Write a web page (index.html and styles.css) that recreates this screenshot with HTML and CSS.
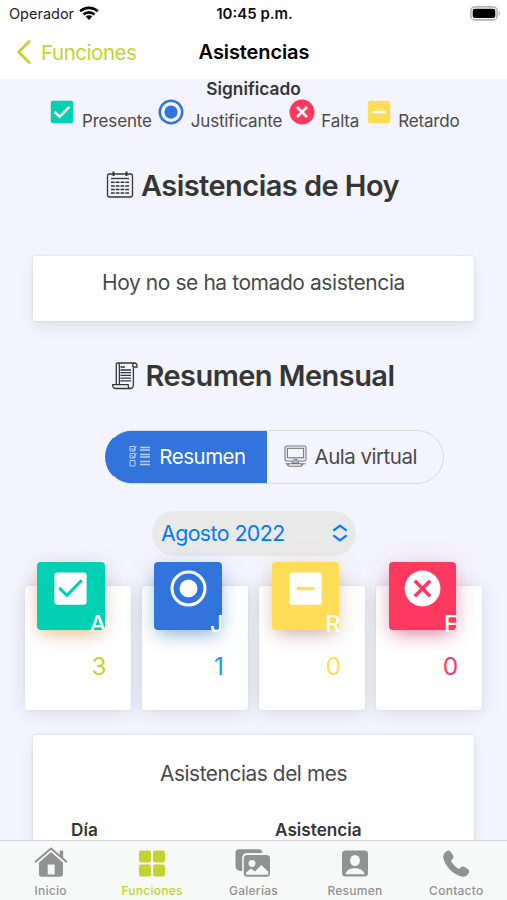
FILE: index.html
```html
<!DOCTYPE html>
<html lang="es">
<head>
<meta charset="utf-8">
<title>Asistencias</title>
<link rel="stylesheet" href="styles.css">
</head>
<body>
<div class="app">
  <header class="status">
    <div class="carrier"><span class="t-carrier">Operador</span>
      <svg width="20" height="14" viewBox="0 0 20 14"><g fill="none" stroke="#000" stroke-width="2.7"><path d="M1.2 5.3C6.1.7 13.9.7 18.8 5.3"/><path d="M4.5 8.6c3.1-2.9 7.9-2.9 11 0"/></g><path d="M6.7 10.6c1.9-1.7 4.7-1.7 6.6 0L10 14z"/></svg>
    </div>
    <span class="clock">10:45 p.m.</span>
    <svg class="battery" width="31" height="15" viewBox="0 0 31 15"><rect x=".9" y=".9" width="26.2" height="13" rx="4" fill="#fff" stroke="#b5b5b5" stroke-width="1.6"/><rect x="2.7" y="2.7" width="22.6" height="9.4" rx="2" /><path d="M28.6 5c2 .8 2 4 0 4.900z" fill="#b5b5b5"/></svg>
  </header>
  <nav class="nav">
    <div class="back"><svg width="16" height="24" viewBox="0 0 16 24"><path d="M13.200 1.500 2.500 12l10.700 10.500" fill="none" stroke="#c2d430" stroke-width="2.700" stroke-linecap="round" stroke-linejoin="round"/></svg><span class="t-back">Funciones</span></div>
    <h1 class="title">Asistencias</h1>
    <span></span>
  </nav>

  <main class="content">
    <section class="meaning">
      <strong class="t-meaning">Significado</strong>
      <div class="legend">
        <svg viewBox="0 0 24 24"><rect x="3" y="3" width="18" height="18" rx="1.600" fill="#00d1b2"/><path d="M6.200 11.900l3.900 3.900 8-8" fill="none" stroke="#fff" stroke-width="1.900"/></svg><span class="l1">Presente</span>
        <svg viewBox="0 0 24 24" fill="#3273dc"><path d="M12 20a8 8 0 1 1 0-16 8 8 0 0 1 0 16m0-18a10 10 0 1 0 0 20 10 10 0 0 0 0-20"/><circle cx="12" cy="12" r="5.300"/></svg><span class="l2">Justificante</span>
        <svg viewBox="0 0 24 24" fill="#ff3860"><circle cx="12" cy="12" r="10"/><path d="M8 8l8 8m0-8-8 8" stroke="#fff" stroke-width="2"/></svg><span class="l3">Falta</span>
        <svg viewBox="0 0 24 24" fill="#ffdd57"><rect x="3" y="3" width="18" height="18" rx="2"/><path d="M7 12h10" stroke="#fff" stroke-width="2"/></svg><span class="l4">Retardo</span>
      </div>
    </section>

    <h2 class="heading today">
      <svg width="28" height="28" viewBox="0 0 28 28" fill="none" stroke="#363636" stroke-width="1.300"><rect x="1.500" y="3" width="25" height="23" rx="1.800"/><path d="M7.500 .500v4.500M20.500 .500v4.500" stroke-width="2"/><path d="M5 7.500h18"/><path d="M5 11.300h18M5 14.900h18M5 18.500h18M5 22.100h18" stroke-width="1.500" stroke-dasharray="3.700 1.060"/></svg>
      <span class="t-today">Asistencias de Hoy</span>
    </h2>
    <div class="card notice"><span class="t-notice">Hoy no se ha tomado asistencia</span></div>

    <h2 class="heading monthly">
      <svg width="26" height="28" viewBox="0 0 26 28" fill="none" stroke="#363636" stroke-width="1.300"><path d="M4.300 22.500V4.500c0-2.500-.600-3.500 1.800-3.500h15.700c3 0 3.500 1.800 3.200 4h-3.600v17.300c0 3-.900 4.200-2.900 4.200H3.500C1.500 26.500.700 25 .700 22.700h15.500c0 2.300.500 3.800 2.300 3.800M6.100 1c1.300.300 1.300 1.500 1.300 3v18.700M21.800 1c-1 .500-1.100 2-1.100 4"/><path d="M8.500 5h4.500M8.500 8h10.500M8.500 10.700h10.500M8.500 13.400h10.500M8.500 16.100h10.500M8.500 18.800h10.500" stroke-width="1.300"/></svg>
      <span class="t-monthly">Resumen Mensual</span>
    </h2>
    <div class="switch">
      <button class="seg active"><svg width="22" height="22" viewBox="0 0 22 22" fill="none" stroke="#b8cff2" stroke-width="1"><path d="M1 1.500h5v4.500H1zM1 8.500h5v4.500H1zM1 15.500h5v5.500H1zM2.500 3l2 2.500L7.500 1M2.500 10l2 2.500L7.500 8"/><path d="M11 2.500h10M11 5h10M11 9.500h10M11 12h10M11 16.500h10M11 19.500h10" stroke-width="1.300"/></svg><span class="t-res">Resumen</span></button>
      <button class="seg"><svg width="23" height="22" viewBox="0 0 23 22" fill="none" stroke="#777" stroke-width="1.100"><rect x="1" y="1" width="21" height="15" rx="1.700"/><rect x="3.400" y="3.300" width="16.200" height="9.500"/><path d="M8.500 16v2h6v-2M9.500 14.500h4M1.500 18.700h20M5 21.300h12l1.500-1.300-1.500-1.200H5L3.500 20z"/></svg><span class="t-aula">Aula virtual</span></button>
    </div>
    <div class="month"><span class="t-month">Agosto 2022</span><svg width="16" height="18" viewBox="0 0 16 18" fill="none" stroke="#007aff" stroke-width="2.100" stroke-linecap="round" stroke-linejoin="round"><path d="M2 6.200 8 1.700l6 4.500M2 11.800l6 4.500 6-4.500"/></svg></div>

    <section class="stats">
      <div class="stat present"><div class="tile"><svg viewBox="0 0 24 24"><rect x="3" y="3" width="18" height="18" rx="1.600" fill="#fff"/><path d="M5.700 11.700 10 15.800l8.300-8.400" fill="none" stroke="#00d1b2" stroke-width="1.700"/></svg><b>A</b></div><span class="num">3</span></div>
      <div class="stat excused"><div class="tile"><svg viewBox="0 0 24 24"><circle cx="12" cy="12" r="9.200" fill="none" stroke="#fff" stroke-width="1.700"/><circle cx="12" cy="12" r="5" fill="#fff"/></svg><b>J</b></div><span class="num">1</span></div>
      <div class="stat late"><div class="tile"><svg viewBox="0 0 24 24"><rect x="3" y="3" width="18" height="18" rx="1.600" fill="#fff"/><path d="M7 12h10" stroke="#ffdd57" stroke-width="1.800"/></svg><b>R</b></div><span class="num">0</span></div>
      <div class="stat absent"><div class="tile"><svg viewBox="0 0 24 24"><circle cx="12" cy="12" r="10" fill="#fff"/><path d="M7.700 7.700l8.600 8.600m0-8.600-8.600 8.600" stroke="#ff3860" stroke-width="1.900"/></svg><b>F</b></div><span class="num">0</span></div>
    </section>

    <section class="card report">
      <span class="t-report">Asistencias del mes</span>
      <div class="columns"><strong class="t-day">Día</strong><strong class="t-att">Asistencia</strong></div>
    </section>
  </main>

  <footer class="tabs">
    <div class="tab"><svg width="34" height="32" viewBox="0 0 34 32" fill="#929292"><path d="M5 16.500 17 6l12 10.500V28c0 1.700-1 2.700-2.700 2.700H7.700C6 30.700 5 29.700 5 28zM13.700 18.500v10h7v-10z" fill-rule="evenodd"/><path d="M1.800 15.500 17 2.500l15.200 13" fill="none" stroke="#f7f8f8" stroke-width="4.500"/><path d="M1.800 15.500 17 2.500l15.200 13" fill="none" stroke="#929292" stroke-width="2.100" stroke-linecap="round" stroke-linejoin="round"/><path d="M25.700 4.500h3.500v8l-3.500-3z"/></svg><span>Inicio</span></div>
    <div class="tab on"><svg width="34" height="32" viewBox="0 0 34 32" fill="#c2d430"><rect x="4" y="4.500" width="12" height="12" rx="2.300"/><rect x="18" y="4.500" width="12" height="12" rx="2.300"/><rect x="4" y="18.500" width="12" height="12" rx="2.300"/><rect x="18" y="18.500" width="12" height="12" rx="2.300"/></svg><span>Funciones</span></div>
    <div class="tab"><svg width="36" height="32" viewBox="0 0 36 32" fill="#929292"><path d="M4 3.300h20c2.200 0 3.300 1.200 3.300 3.700H12.500C9 7 7.200 9 7.200 12v13C2.500 25 .500 23.500.500 20V7c0-2.500 1.200-3.700 3.500-3.700z"/><rect x="8.800" y="9" width="26.200" height="21.800" rx="3.500"/><circle cx="17" cy="17.500" r="3.400" fill="#f7f8f8"/><path d="M11 28.800v-2.300l5-4 4 3 6.200-6.500 7 6.500v3.300z" fill="#f7f8f8"/></svg><span>Galerías</span></div>
    <div class="tab"><svg width="34" height="32" viewBox="0 0 34 32"><rect x="4" y="4.500" width="26" height="26" rx="3.500" fill="#929292"/><ellipse cx="17" cy="14.500" rx="4.900" ry="5.600" fill="#f7f8f8"/><path d="M7.500 28.300c1-8 18-8 19 0z" fill="#f7f8f8"/></svg><span>Resumen</span></div>
    <div class="tab"><svg width="34" height="32" viewBox="0 0 34 32"><path d="M7.200 5.500c2-1.500 3.500-1 4.700.700l2 3c1 1.500.700 3-.500 4-1.700 1.300-1.500 1.700-.300 3.500 1.500 2.300 3.300 4 5.500 5.500 1.500 1 2 .800 3-.600 1-1.400 2.700-1.600 4-.600l3 2c1.700 1.200 2 2.700.800 4.500-2 3-4.700 4-8 2.800C13.500 27.500 7 21 4.500 13c-1-3.200.200-5.600 2.700-7.500z" fill="#929292"/></svg><span>Contacto</span></div>
  </footer>
</div>
</body>
</html>
```

FILE: styles.css
```css
* { box-sizing: border-box; }
body { margin: 0; font-family: Inter, "Liberation Sans", sans-serif; color: #4a4a4a; }
svg { display: block; flex: none; }
span, strong, h1 { white-space: nowrap; }
.app { width: 507px; height: 900px; display: flex; flex-direction: column; overflow: hidden; background: #f3f4fd; }

.status { height: 28px; flex: none; background: #fff; display: grid; grid-template-columns: 1fr auto 1fr; align-items: center; padding: 0 6px 1px 9px; font-size: 15px; color: #222; }
.carrier { display: flex; align-items: center; gap: 5px; }
.carrier svg { margin-top: -2px; }
.t-carrier { font-size: 14.5px; }
.clock { font-weight: 600; color: #111; font-size: 15px; margin-right: 1px; }
.battery { justify-self: end; margin-top: -1px; }

.nav { height: 51px; flex: none; background: #fff; display: grid; grid-template-columns: 1fr auto 1fr; align-items: center; padding: 0 15px 3px 16px; }
.back { display: flex; align-items: center; gap: 9px; color: #c2d430; font-size: 20.500px; letter-spacing: -.45px; }
.title { margin: 0; color: #000; font-size: 20px; font-weight: 600; letter-spacing: -.1px; }

.content { flex: 1; min-height: 0; overflow: hidden; display: flex; flex-direction: column; align-items: center; }
.meaning { display: flex; flex-direction: column; align-items: center; height: 77px; flex: none; }
.t-meaning { font-size: 17.300px; font-weight: 600; color: #363636; line-height: 19px; }
.legend { display: flex; align-items: flex-start; font-size: 17px; letter-spacing: -.17px; gap: 4.500px; line-height: 20px; margin-top: -1px; }
.legend svg { width: 30px; height: 30px; }
.legend span { margin-top: 14px; }

.heading { margin: 0; display: flex; align-items: center; justify-content: center; gap: 7px; color: #363636; font-size: 29px; letter-spacing: -.55px; font-weight: 600; line-height: 40px; flex: none; }
.heading svg { margin-top: -1px; }
.today { margin-top: 9px; padding-right: 2px; }
.t-today { padding-top: 1px; }
.card { width: 441px; flex: none; background: #fff; border-radius: 3px; box-shadow: 0 7px 14px rgba(10,10,10,.07), 0 0 3px rgba(10,10,10,.12); text-align: center; }
.notice { height: 65px; margin-top: 50px; font-size: 21px; letter-spacing: -.43px; line-height: 54px; }
.monthly { margin-top: 35px; }

.switch { display: flex; width: 339px; height: 54px; margin-top: 34px; margin-left: 42px; border: 1.500px solid #dbdbdb; border-radius: 27px; overflow: hidden; flex: none; background: linear-gradient(90deg, #3273dc 40px, transparent 0) border-box; border-left-color: #3273dc; }
.seg { flex: 1; border: 0; background: none; padding: 0 9px 2px 0; display: flex; align-items: center; justify-content: center; gap: 8px; font: 400 20.500px Inter, sans-serif; letter-spacing: -.5px; color: #4a4a4a; }
.seg.active { flex: none; width: 162px; margin: -2px 0 -2px -1.500px; padding: 0 0 2px 4px; background: #3273dc; color: #fff; }
.month { width: 204px; height: 45px; margin-top: 27px; border-radius: 23px; background: #e9e9ea; color: #007aff; display: flex; align-items: center; justify-content: space-between; padding: 0 8px 1px 9.500px; font-size: 21.300px; letter-spacing: -.55px; flex: none; }

.stats { display: flex; gap: 11.200px; margin-top: 30px; flex: none; }
.stat { width: 106px; height: 124px; background: #fff; border-radius: 3px; box-shadow: 0 2px 20px rgba(10,10,10,.11), 0 0 3px rgba(10,10,10,.06); padding-left: 12.500px; }
.tile { width: 67.500px; height: 67.500px; margin-top: -24px; border-radius: 4px; display: flex; flex-direction: column; align-items: center; }
.tile svg { width: 43px; height: 43px; margin-top: 5px; }
.tile b { align-self: flex-end; margin: -1px -1.500px 0 0; font-weight: 500; font-size: 23.500px; line-height: 30px; color: #fff; }
.num { display: block; width: 69.500px; text-align: right; font-size: 24.500px; line-height: 30px; margin-top: 21.500px; }
.present .tile { background: #00d1b2; box-shadow: 0 8px 16px -6px rgba(240,150,30,.5), 0 3px 20px rgba(120,100,60,.18); }
.excused .tile { background: #3273dc; box-shadow: 0 8px 16px -6px rgba(30,90,160,.45), 0 4px 24px rgba(30,130,190,.2); }
.late .tile { background: #ffdd57; box-shadow: 0 8px 16px -6px rgba(150,90,90,.45), 0 4px 24px rgba(190,120,60,.18); }
.absent .tile { background: #ff3860; box-shadow: 0 8px 16px -6px rgba(160,20,80,.45), 0 4px 24px rgba(220,50,120,.22); }
.present .num { color: #c2d430; }
.excused .num { color: #209cee; }
.late .num { color: #ffdd57; }
.absent .num { color: #ff3860; }

.report { margin-top: 25px; height: 200px; padding-top: 24px; font-size: 20.800px; letter-spacing: -.41px; line-height: 30px; }
.columns { display: grid; grid-template-columns: 204px 1fr; padding-left: 38px; margin-top: 29px; text-align: left; font-size: 17.200px; letter-spacing: 0; line-height: 24px; color: #363636; }
.columns strong { font-weight: 600; }

.tabs { height: 60px; flex: none; display: grid; grid-template-columns: repeat(5, 1fr); background: #f7f8f8; border-top: 1px solid #d5d6d8; position: relative; }
.tab { display: flex; flex-direction: column; align-items: center; padding-top: 5px; font-size: 12px; font-weight: 500; color: #929292; line-height: 16px; }
.tab span { margin-top: 5px; letter-spacing: .25px; }
.tab.on { color: #c2d430; }
```
